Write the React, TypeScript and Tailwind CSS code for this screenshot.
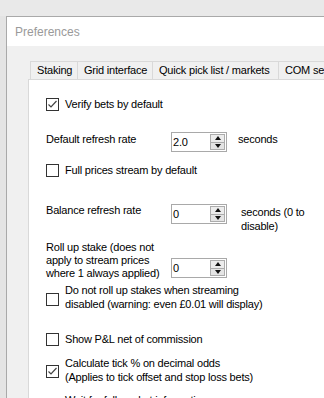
import React from 'react'

const font = { fontFamily: '"Liberation Sans", Arial, sans-serif' }

function Check({ checked = false, className = '' }: { checked?: boolean; className?: string }) {
  return (
    <div className={`w-[13px] h-[13px] flex-none border border-[#333] bg-white flex items-center justify-center ${className}`}>
      {checked && (
        <svg width="11" height="11" viewBox="0 0 11 11">
          <polyline points="1.5,5.5 4,8 9.5,2" fill="none" stroke="#444" strokeWidth="1.2" />
        </svg>
      )}
    </div>
  )
}

function Spin({ value }: { value: string }) {
  return (
    <div className="w-[56px] h-[20px] flex-none border border-[#a9a9a9] bg-white flex items-center pl-[1px] pr-[1px]">
      <span className="flex-1 leading-[13px]">{value}</span>
      <div className="w-[15px] h-[16px] flex flex-col">
        <div className="flex-1 border border-[#acacac] bg-[#ececec] flex items-center justify-center">
          <svg width="6" height="4" viewBox="0 0 6 4"><polygon points="3,0 6,4 0,4" fill="#111" /></svg>
        </div>
        <div className="flex-1 border border-t-0 border-[#acacac] bg-[#e4e4e4] flex items-center justify-center">
          <svg width="6" height="4" viewBox="0 0 6 4"><polygon points="0,0 6,0 3,4" fill="#111" /></svg>
        </div>
      </div>
    </div>
  )
}

export default function App() {
  const tabs = [
    { label: 'Staking', w: 'w-[47px]' },
    { label: 'Grid interface', w: 'w-[75px]' },
    { label: 'Quick pick list / markets', w: 'w-[126px]' },
    { label: 'COM server', w: 'w-[70px]' },
  ]

  return (
    <div className="w-[324px] h-[398px] overflow-hidden bg-[#e9e9e9] text-[11px] tracking-[-0.2px] text-black" style={font}>
      <div className="h-[16px]" />
      <div className="flex h-[382px]">
        <div className="w-[6px] flex-none bg-[#e4e4e4]" />
        <div className="flex-1 flex flex-col border-l border-t border-[#a9a9a9] min-w-0">
          {/* Title bar */}
          <div className="h-[29px] flex-none bg-white flex items-center pl-[8px] text-[12px] text-[#9a9a9a] tracking-normal">
            Preferences
          </div>

          {/* Body */}
          <div className="flex-1 bg-[#f0f0f0] pt-[15px] pl-[21px] flex flex-col min-h-0">
            <div className="flex ml-[2px] h-[18px] flex-none">
              {tabs.map(t => (
                <div
                  key={t.label}
                  className={`${t.w} flex-none border-t border-l border-[#d9d9d9] bg-[#f0f0f0] flex items-center pl-[6px] whitespace-nowrap overflow-hidden`}
                >
                  {t.label}
                </div>
              ))}
            </div>

            {/* Tab panel */}
            <div className="flex-1 bg-white border-l border-t border-[#d9d9d9] pl-[17px] flex flex-col">
              <div className="mt-[17px] h-[15px] flex items-center gap-[6px]">
                <Check checked />
                <span>Verify bets by default</span>
              </div>

              <div className="mt-[20px] h-[20px] flex items-start">
                <span className="w-[125px] flex-none leading-[13px] pt-[1px]">Default refresh rate</span>
                <Spin value="2.0" />
                <span className="ml-[11px] leading-[13px] pt-[1px]">seconds</span>
              </div>

              <div className="mt-[11px] h-[15px] flex items-center gap-[6px]">
                <Check />
                <span>Full prices stream by default</span>
              </div>

              <div className="mt-[26px] h-[28px] flex items-start">
                <span className="w-[125px] flex-none leading-[13px]">Balance refresh rate</span>
                <Spin value="0" />
                <span className="ml-[14px] leading-[14px] pt-[1px]">
                  seconds (0 to
                  <br />
                  disable)
                </span>
              </div>

              <div className="mt-[9px] h-[39px] flex items-start">
                <span className="w-[125px] flex-none leading-[13px]">
                  Roll up stake (does not
                  <br />
                  apply to stream prices
                  <br />
                  where 1 always applied)
                </span>
                <div className="mt-[17px]">
                  <Spin value="0" />
                </div>
              </div>

              <div className="mt-[3px] flex items-start gap-[6px]">
                <Check className="mt-[10px]" />
                <span className="leading-[14px]">
                  Do not roll up stakes when streaming
                  <br />
                  disabled (warning: even £0.01 will display)
                </span>
              </div>

              <div className="mt-[21px] h-[15px] flex items-center gap-[6px]">
                <Check />
                <span>Show P&amp;L net of commission</span>
              </div>

              <div className="mt-[9px] flex items-start gap-[6px]">
                <Check checked className="mt-[9px]" />
                <span className="leading-[14px]">
                  Calculate tick % on decimal odds
                  <br />
                  (Applies to tick offset and stop loss bets)
                </span>
              </div>

              <div className="mt-[9px] flex items-start gap-[6px]">
                <Check className="mt-[10px]" />
                <span className="leading-[14px]">
                  Wait for full market information
                  <br />
                  before placing bets
                </span>
              </div>
            </div>
          </div>
        </div>
      </div>
    </div>
  )
}
